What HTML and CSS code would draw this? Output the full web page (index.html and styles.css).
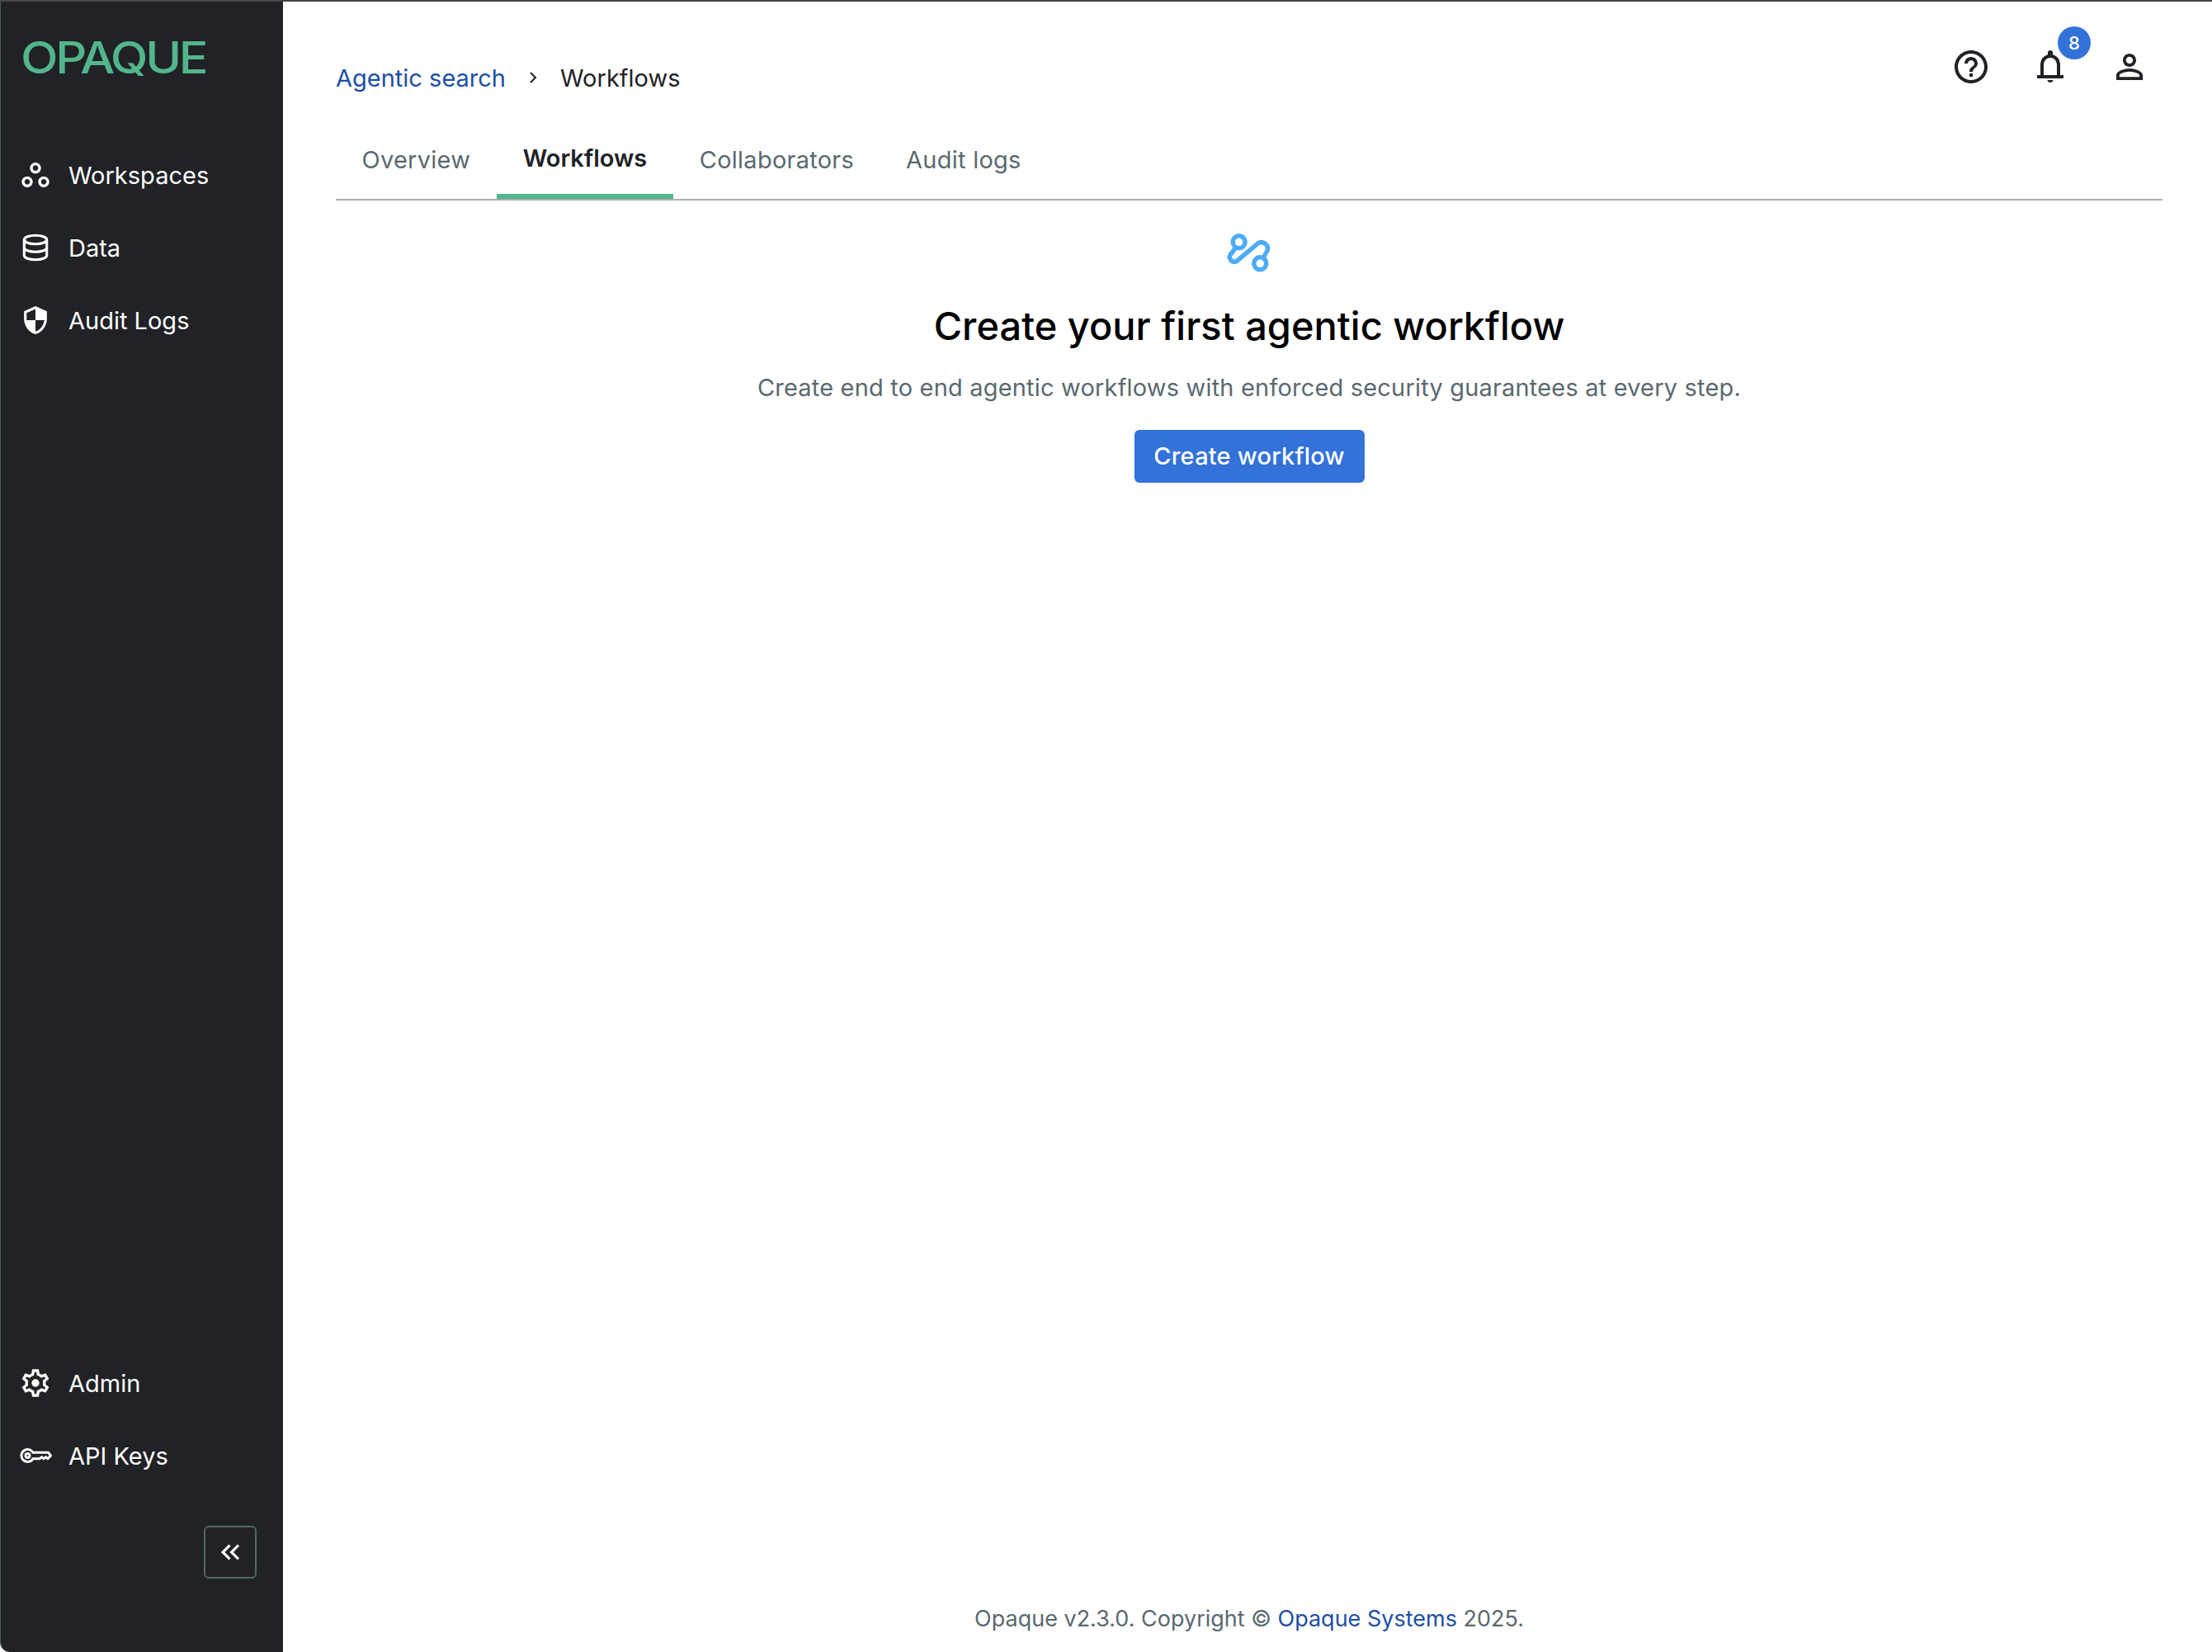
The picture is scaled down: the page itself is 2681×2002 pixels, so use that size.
FILE: index.html
```html
<!DOCTYPE html>
<html lang="en">
<head>
<meta charset="utf-8">
<title>Workflows</title>
<link rel="stylesheet" href="styles.css">
</head>
<body>
<div class="app">
  <aside class="sidebar">
    <div class="logo">OPAQUE</div>
    <nav class="nav">
      <a class="nav-item"><svg class="nav-icon" viewBox="0 0 24 24"><path d="M6 15c1.1 0 2 .9 2 2s-.9 2-2 2-2-.9-2-2 .9-2 2-2m0-2c-2.2 0-4 1.8-4 4s1.8 4 4 4 4-1.8 4-4-1.8-4-4-4m6-8c1.1 0 2 .9 2 2s-.9 2-2 2-2-.9-2-2 .9-2 2-2m0-2C9.8 3 8 4.8 8 7s1.8 4 4 4 4-1.8 4-4-1.8-4-4-4m6 12c1.1 0 2 .9 2 2s-.9 2-2 2-2-.9-2-2 .9-2 2-2m0-2c-2.2 0-4 1.8-4 4s1.8 4 4 4 4-1.8 4-4-1.8-4-4-4"/></svg><span>Workspaces</span></a>
      <a class="nav-item"><svg class="nav-icon stroke" viewBox="-1 -1 38 38"><ellipse cx="18" cy="9" rx="13" ry="5"/><path d="M5 9v18c0 3 6 5 13 5s13-2 13-5V9M5 18c0 3 6 5 13 5s13-2 13-5"/></svg><span>Data</span></a>
      <a class="nav-item"><svg class="nav-icon" viewBox="-1 -1 26 26"><path d="M12 1 3 5v6c0 5.55 3.84 10.74 9 12 5.16-1.26 9-6.45 9-12V5zm0 10.99h7c-.53 4.12-3.28 7.79-7 8.94V12H5V6.3l7-3.11z"/></svg><span>Audit Logs</span></a>
    </nav>
    <nav class="nav nav-bottom">
      <a class="nav-item"><svg class="nav-icon" viewBox="0 0 24 24"><path d="M19.43 12.98c.04-.32.07-.64.07-.98 0-.34-.03-.66-.07-.98l2.11-1.65c.19-.15.24-.42.12-.64l-2-3.46c-.09-.16-.26-.25-.44-.25-.06 0-.12.01-.17.03l-2.49 1c-.52-.4-1.08-.73-1.69-.98l-.38-2.65C14.46 2.18 14.25 2 14 2h-4c-.25 0-.46.18-.49.42l-.38 2.65c-.61.25-1.17.59-1.69.98l-2.49-1c-.06-.02-.12-.03-.18-.03-.17 0-.34.09-.43.25l-2 3.46c-.13.22-.07.49.12.64l2.11 1.65c-.04.32-.07.65-.07.98 0 .33.03.66.07.98l-2.11 1.65c-.19.15-.24.42-.12.64l2 3.46c.09.16.26.25.44.25.06 0 .12-.01.17-.03l2.49-1c.52.4 1.08.73 1.69.98l.38 2.65c.03.24.24.42.49.42h4c.25 0 .46-.18.49-.42l.38-2.65c.61-.25 1.17-.59 1.69-.98l2.49 1c.06.02.12.03.18.03.17 0 .34-.09.43-.25l2-3.46c.12-.22.07-.49-.12-.64zm-1.98-1.71c.04.31.05.52.05.73 0 .21-.02.43-.05.73l-.14 1.13.89.7 1.08.84-.7 1.21-1.27-.51-1.04-.42-.9.68c-.43.32-.84.56-1.25.73l-1.06.43-.16 1.13-.2 1.35h-1.4l-.19-1.35-.16-1.13-1.06-.43c-.43-.18-.83-.41-1.23-.71l-.91-.7-1.06.43-1.27.51-.7-1.21 1.08-.84.89-.7-.14-1.13c-.03-.31-.05-.54-.05-.74s.02-.43.05-.73l.14-1.13-.89-.7-1.08-.84.7-1.21 1.27.51 1.04.42.9-.68c.43-.32.84-.56 1.25-.73l1.06-.43.16-1.13.2-1.35h1.39l.19 1.35.16 1.13 1.06.43c.43.18.83.41 1.23.71l.91.7 1.06-.43 1.27-.51.7 1.21-1.07.85-.89.7z"/><circle cx="12" cy="12" r="2.800"/></svg><span>Admin</span></a>
      <a class="nav-item"><svg class="nav-icon stroke key" viewBox="0 0 40 40"><circle cx="10.500" cy="20" r="2.500"/><path d="M17 16.300H35.500L38.500 20L35 23.700L32.500 21.800L30 23.700L27.500 21.800L25 23.700H17A7.500 7.500 0 1 1 17 16.300Z"/></svg><span>API Keys</span></a>
    </nav>
    <div class="collapse-row">
      <button class="collapse" type="button"><svg viewBox="0 0 24 24"><path d="M17.59 18 19 16.59 14.42 12 19 7.41 17.59 6l-6 6z"/><path d="M11 18l1.41-1.41L7.83 12l4.58-4.59L11 6l-6 6z"/></svg></button>
    </div>
  </aside>
  <main class="main">
    <header class="topbar">
      <div class="crumbs">
        <a class="crumb-link">Agentic search</a>
        <svg class="crumb-sep" viewBox="0 0 10 16"><path d="M2 2l6 6-6 6"/></svg>
        <span>Workflows</span>
      </div>
      <div class="actions">
        <svg class="action" viewBox="0 0 24 24"><path d="M11 18h2v-2h-2zm1-16C6.48 2 2 6.48 2 12s4.48 10 10 10 10-4.48 10-10S17.52 2 12 2m0 18c-4.41 0-8-3.59-8-8s3.59-8 8-8 8 3.59 8 8-3.59 8-8 8m0-14c-2.21 0-4 1.79-4 4h2c0-1.1.9-2 2-2s2 .9 2 2c0 2-3 1.75-3 5h2c0-2.25 3-2.5 3-5 0-2.21-1.79-4-4-4"/></svg>
        <div class="bell">
          <svg class="action" viewBox="0 0 24 24"><path fill-rule="evenodd" d="M12 21.500c.9 0 1.600-.6 1.800-1.500h-3.600c.2.9.9 1.500 1.800 1.500zM4 17h2v-6c0-3.070 1.640-5.640 4.500-6.320V3.500a1.500 1.500 0 0 1 3 0v1.180C16.370 5.360 18 7.930 18 11v6h2v2H4zM8 17h8v-6c0-2.480-1.510-4.500-4-4.500S8 8.520 8 11z"/></svg>
          <span class="badge">8</span>
        </div>
        <svg class="action" viewBox="0 0 24 24"><path d="M12 5.900c1.160 0 2.100.94 2.100 2.100s-.94 2.100-2.100 2.100S9.900 9.160 9.900 8s.94-2.100 2.100-2.100m0 9c2.970 0 6.100 1.460 6.100 2.100v1.100H5.900V17c0-.64 3.130-2.100 6.100-2.100M12 4C9.790 4 8 5.790 8 8s1.790 4 4 4 4-1.790 4-4-1.790-4-4-4m0 9c-2.670 0-8 1.340-8 4v3h16v-3c0-2.660-5.330-4-8-4"/></svg>
      </div>
    </header>
    <div class="tabs">
      <a class="tab">Overview</a>
      <a class="tab active">Workflows</a>
      <a class="tab">Collaborators</a>
      <a class="tab">Audit logs</a>
    </div>
    <section class="empty">
      <svg class="empty-icon" viewBox="0 0 54 48"><circle cx="14.700" cy="10.300" r="7.500"/><circle cx="40.300" cy="36.300" r="7.500"/><path d="M10 18L4 26C1.500 31 7.500 37 12.500 33L37 12.500C43 7.500 52 14 49 20.500L45 28"/></svg>
      <h1 class="empty-title">Create your first agentic workflow</h1>
      <p class="empty-text">Create end to end agentic workflows with enforced security guarantees at every step.</p>
      <button class="primary" type="button">Create workflow</button>
    </section>
    <footer class="footer">Opaque v2.3.0. Copyright © <a class="footer-link">Opaque Systems</a> 2025.</footer>
  </main>
</div>
</body>
</html>
```
FILE: styles.css
```css
* { box-sizing: border-box; }
html, body { height: 100%; }
body {
  margin: 0;
  background: #fff;
  font-family: Inter, "Noto Sans", sans-serif;
  color: #202226;
  overflow: hidden;
}
.app {
  display: flex;
  height: 100vh;
  border-top: 2px solid #444648;
}
.sidebar {
  width: 343px;
  flex: none;
  display: flex;
  flex-direction: column;
  background: #202226;
  border-left: 1px solid #55585c;
  border-bottom-left-radius: 12px;
  padding-left: 22px;
}
.logo {
  font-size: 53px;
  line-height: 66px;
  margin-top: 35px;
  margin-bottom: 65px;
  margin-left: 2px;
  color: #53b58b;
  font-weight: 500;
  letter-spacing: -3px;
  height: 66px;
  transform: scaleX(1.12);
  transform-origin: left center;
}
.nav { display: flex; flex-direction: column; }
.nav-item {
  display: flex;
  align-items: center;
  height: 88px;
  gap: 20px;
  color: #fff;
  font-size: 29px;
}
.nav-icon { width: 40px; height: 40px; fill: #fff; flex: none; }
.nav-icon.stroke { fill: none; stroke: #fff; stroke-width: 3; }
.nav-icon.key { stroke-width: 3; }
.nav-bottom { margin-top: auto; }
.collapse-row { display: flex; justify-content: flex-end; padding: 41px 32px 89px 0; }
.collapse {
  width: 64px;
  height: 64px;
  padding: 0;
  display: flex;
  align-items: center;
  justify-content: center;
  background: none;
  border: 2px solid #56666c;
  border-radius: 6px;
}
.collapse svg { width: 38px; height: 38px; fill: #fff; }
.main {
  flex: 1;
  display: flex;
  flex-direction: column;
  padding: 0 60px 0 64px;
  min-width: 0;
}
.topbar {
  display: flex;
  justify-content: space-between;
  height: 146px;
}
.crumbs {
  display: flex;
  align-items: center;
  gap: 28px;
  height: 34px;
  margin-top: 75px;
  font-size: 29px;
}
.crumb-link, .footer-link { color: #1e4fa3; }
.crumb-sep { width: 10px; height: 16px; fill: none; stroke: #202226; stroke-width: 2; }
.actions { display: flex; gap: 48px; margin-top: 55px; padding-right: 16px; align-items: flex-start; }
.action { width: 48px; height: 48px; fill: #202226; display: block; }
.bell { position: relative; width: 48px; height: 48px; }
.badge {
  position: absolute;
  left: 33px;
  top: -25px;
  width: 40px;
  height: 40px;
  border-radius: 50%;
  background: #3272d9;
  color: #fff;
  font-size: 22px;
  font-weight: 500;
  display: flex;
  align-items: center;
  justify-content: center;
}
.tabs {
  display: flex;
  height: 95px;
  border-bottom: 2px solid #aab0b4;
}
.tab {
  display: flex;
  align-items: center;
  height: 93px;
  padding: 0 31.5px 2px;
  font-size: 29px;
  letter-spacing: .25px;
  color: #5a6970;
}
.tab.active {
  color: #202226;
  font-weight: 600;
  letter-spacing: 0;
  padding: 0 32px;
  border-bottom: 6px solid #53b58b;
}
.empty {
  display: flex;
  flex-direction: column;
  align-items: center;
}
.empty-icon {
  width: 54px;
  height: 48px;
  margin-top: 40px;
  fill: none;
  stroke: #4dabf5;
  stroke-width: 5.5;
  stroke-linecap: round;
}
.empty-title {
  margin: 32px 0 0;
  font-size: 47px;
  line-height: 64px;
  font-weight: 500;
  color: #000;
}
.empty-text {
  margin: 22px 0 0;
  font-size: 29px;
  letter-spacing: .18px;
  line-height: 42px;
  color: #5a6970;
}
.primary {
  margin-top: 30px;
  width: 279px;
  height: 64px;
  padding-bottom: 2px;
  background: #3272d9;
  border: 0;
  border-radius: 6px;
  color: #fff;
  font-family: inherit;
  font-size: 29px;
  letter-spacing: .2px;
  font-weight: 500;
}
.footer {
  margin-top: auto;
  padding-bottom: 21px;
  line-height: 38px;
  text-align: center;
  font-size: 27px;
  color: #5a6970;
}
```
